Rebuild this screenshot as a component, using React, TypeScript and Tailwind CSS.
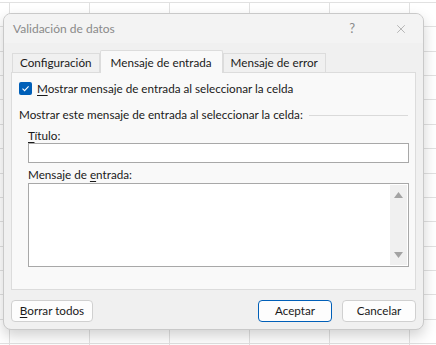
import { X } from 'lucide-react'

const font = { fontFamily: 'Lato, "Noto Sans", sans-serif' }

function U({ children }: { children: string }) {
  return <span className="underline underline-offset-2">{children}</span>
}

function Grid() {
  const rows = Array.from({ length: 15 })
  const cols = Array.from({ length: 6 })
  return (
    <div className="absolute inset-0 pt-[2px] overflow-hidden">
      {rows.map((_, r) => (
        <div key={r} className="flex h-[24.36px] border-t border-[#e1e1e1]">
          <div className="w-[10px] shrink-0 border-r border-[#e1e1e1]" />
          {cols.map((_, c) => (
            <div key={c} className="w-[80px] shrink-0 border-r border-[#e1e1e1]" />
          ))}
        </div>
      ))}
    </div>
  )
}

function Tab({ label, active }: { label: string; active?: boolean }) {
  if (active) {
    return (
      <div className="relative z-10 -mb-px h-[23px] px-[10px] flex items-start pt-[3px] bg-[#f9f9f9] border border-b-0 border-[#dcdcdc] rounded-t-[2px]">
        {label}
      </div>
    )
  }
  return (
    <div className="h-[19px] px-[7px] flex items-center bg-[#f0f0f0] border border-b-0 border-[#dcdcdc]">
      {label}
    </div>
  )
}

function Btn({ children, primary, w }: { children: React.ReactNode; primary?: boolean; w: string }) {
  return (
    <div
      className={`h-[22px] ${w} flex items-center justify-center rounded-[4px] bg-[#fdfdfd] border ${
        primary ? 'border-[#005fb8]' : 'border-[#d0d0d0]'
      }`}
    >
      {children}
    </div>
  )
}

export default function App() {
  return (
    <div className="relative w-[436px] h-[345px] bg-white overflow-hidden text-[11.7px] text-[#1a1a1a]" style={font}>
      <Grid />
      <div className="absolute left-[3px] top-[13px] w-[421px] h-[317px] flex flex-col rounded-[8px] border border-[#c9c9c9] bg-[#f0f0f0] shadow-[0_6px_14px_rgba(0,0,0,0.18)] overflow-hidden">
        {/* title bar */}
        <div className="h-[29px] shrink-0 flex items-center pl-[9px] pr-[15px] bg-[#f3f3f3] text-[#8a8a8a] text-[12px]">
          <span>Validación de datos</span>
          <span className="ml-auto mr-[39px] text-[13px]">?</span>
          <X size={14} strokeWidth={1} className="text-[#8a8a8a]" />
        </div>

        <div className="flex-1 flex flex-col px-[7px] pt-[7px]">
          <div className="flex items-end h-[22px] pl-[1px]">
            <Tab label="Configuración" />
            <Tab label="Mensaje de entrada" active />
            <Tab label="Mensaje de error" />
          </div>

          <div className="h-[218px] border border-[#dcdcdc] bg-[#f9f9f9] flex flex-col pl-[7px] pr-[6px] pt-[9px]">
            <div className="flex items-center gap-[5px] h-[13px]">
              <div className="w-[13px] h-[13px] rounded-[2px] bg-[#005fb8] flex items-center justify-center">
                <svg width="9" height="9" viewBox="0 0 9 9">
                  <path d="M1.5 4.6 L3.6 6.6 L7.6 2.4" fill="none" stroke="white" strokeWidth="1.1" />
                </svg>
              </div>
              <span>
                <U>M</U>ostrar mensaje de entrada al seleccionar la celda
              </span>
            </div>

            <div className="flex items-center mt-[12px] h-[16px]">
              <span className="whitespace-nowrap">Mostrar este mensaje de entrada al seleccionar la celda:</span>
              <div className="flex-1 ml-[6px] mr-px h-px bg-[#dadada]" />
            </div>

            <div className="pl-[9px] flex flex-col">
              <div className="mt-[5px] h-[15px] leading-[15px]">
                <U>T</U>ítulo:
              </div>
              <div className="h-[20px] border border-[#a8a8a8] bg-white" />
              <div className="mt-[3px] h-[16px] leading-[16px]">
                Mensaje de <U>e</U>ntrada:
              </div>
              <div className="mt-px h-[84px] border border-[#a8a8a8] bg-white flex justify-end p-px">
                <div className="w-[17px] bg-[#f0f0f0] flex flex-col items-center justify-between py-[7px]">
                  <svg width="9" height="6" viewBox="0 0 9 6">
                    <path d="M0 6 L4.5 0 L9 6 Z" fill="#a3a3a3" />
                  </svg>
                  <svg width="9" height="6" viewBox="0 0 9 6">
                    <path d="M0 0 L9 0 L4.5 6 Z" fill="#a3a3a3" />
                  </svg>
                </div>
              </div>
            </div>
          </div>

          <div className="mt-[10px] flex items-center">
            <Btn w="w-[82px]">
              <span>
                <U>B</U>orrar todos
              </span>
            </Btn>
            <div className="ml-auto flex gap-[10px]">
              <Btn w="w-[74px]" primary>
                Aceptar
              </Btn>
              <Btn w="w-[74px]">Cancelar</Btn>
            </div>
          </div>
        </div>
      </div>
    </div>
  )
}
